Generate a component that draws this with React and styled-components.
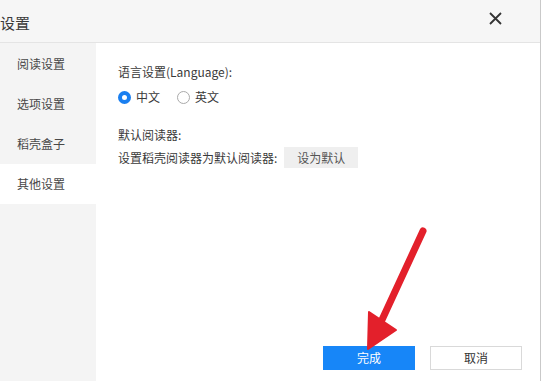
import styled, { createGlobalStyle } from 'styled-components';

const GlobalStyle = createGlobalStyle`
  body {
    margin: 0;
    font-family: "Noto Sans CJK SC", "Noto Sans", sans-serif;
    background: #ffffff;
  }
`

const menuItems = ['阅读设置', '选项设置', '稻壳盒子', '其他设置'];

export default function App() {
  return (
    <>
      <GlobalStyle/>
      <SWindow>
        <STitleBar>
          <STitle>设置</STitle>
          <SClose>
            <svg width="13" height="13" viewBox="0 0 13 13">
              <path d="M1 1L12 12M12 1L1 12" stroke="#333" strokeWidth="1.8" fill="none"/>
            </svg>
          </SClose>
        </STitleBar>

        <SBody>
          <SSidebar>
            {menuItems.map((item, i) => (
              <SMenuItem key={item} $active={i === 3}>{item}</SMenuItem>
            ))}
          </SSidebar>

          <SContent>
            <SLabel>语言设置(Language):</SLabel>
            <SRadioRow>
              <SRadioOption>
                <SRadio $checked/>
                中文
              </SRadioOption>
              <SRadioOption>
                <SRadio/>
                英文
              </SRadioOption>
            </SRadioRow>

            <SSection>
              <SLabel>默认阅读器:</SLabel>
              <SDefaultRow>
                <span>设置稻壳阅读器为默认阅读器:</span>
                <SGrayButton>设为默认</SGrayButton>
              </SDefaultRow>
            </SSection>

            <SFooter>
              <SButton $primary>完成</SButton>
              <SButton>取消</SButton>
            </SFooter>
          </SContent>
        </SBody>

        <SArrow width="541" height="381" viewBox="0 0 541 381">
          <path d="M423 231L381 322" stroke="#e3202b" strokeWidth="7" strokeLinecap="round" fill="none"/>
          <path d="M368 349L369 312L396 330Z" fill="#e3202b" stroke="#e3202b" strokeWidth="2" strokeLinejoin="round"/>
        </SArrow>
      </SWindow>
    </>
  )
}

const SWindow = styled.div`
  position: relative;
  width: 540px;
  height: 381px;
  border-right: 1px solid #c9c9c9;
  display: flex;
  flex-direction: column;
  overflow: hidden;
`

const STitleBar = styled.div`
  height: 42px;
  flex-shrink: 0;
  background: #f6f6f6;
  border-bottom: 1px solid #e4e4e4;
  display: flex;
  align-items: center;
  justify-content: space-between;
  padding: 0 38px 0 0;
`

const STitle = styled.div`
  font-size: 15px;
  color: #3a3a3a;
  margin-top: 3px;
`

const SClose = styled.div`
  display: flex;
  margin-top: -6px;
`

const SBody = styled.div`
  flex: 1;
  display: flex;
`

const SSidebar = styled.div`
  width: 96px;
  background: #f4f4f4;
  padding-top: 1px;
`

const SMenuItem = styled.div`
  height: 40px;
  line-height: 40px;
  padding-left: 17px;
  font-size: 12px;
  color: #484848;
  background: ${p => p.$active ? '#ffffff' : 'transparent'};
`

const SContent = styled.div`
  flex: 1;
  display: flex;
  flex-direction: column;
  padding: 20px 18px 11px 22px;
  font-size: 12px;
  color: #3a3a3a;
`

const SLabel = styled.div`
  line-height: 18px;
`

const SRadioRow = styled.div`
  display: flex;
  gap: 17px;
  margin-top: 7px;
`

const SRadioOption = styled.div`
  display: flex;
  align-items: center;
  gap: 5px;
  line-height: 18px;
`

const SRadio = styled.span`
  width: 13px;
  height: 13px;
  box-sizing: border-box;
  border-radius: 50%;
  border: ${p => p.$checked ? '4px solid #1a7ff0' : '1px solid #aaa'};
  background: #fff;
`

const SSection = styled.div`
  margin-top: 20px;
  display: flex;
  flex-direction: column;
  gap: 3px;
`

const SDefaultRow = styled.div`
  display: flex;
  align-items: center;
  gap: 7px;
`

const SGrayButton = styled.div`
  width: 74px;
  height: 21px;
  line-height: 21px;
  text-align: center;
  background: #efefef;
  color: #555;
`

const SFooter = styled.div`
  margin-top: auto;
  display: flex;
  justify-content: flex-end;
  gap: 15px;
`

const SButton = styled.div`
  width: 92px;
  height: 24px;
  box-sizing: border-box;
  line-height: 22px;
  text-align: center;
  font-size: 12px;
  background: ${p => p.$primary ? '#1786f8' : '#fff'};
  color: ${p => p.$primary ? '#fff' : '#333'};
  border: 1px solid ${p => p.$primary ? '#1786f8' : '#d9d9d9'};
`

const SArrow = styled.svg`
  position: absolute;
  left: 0;
  top: 0;
  pointer-events: none;
`
